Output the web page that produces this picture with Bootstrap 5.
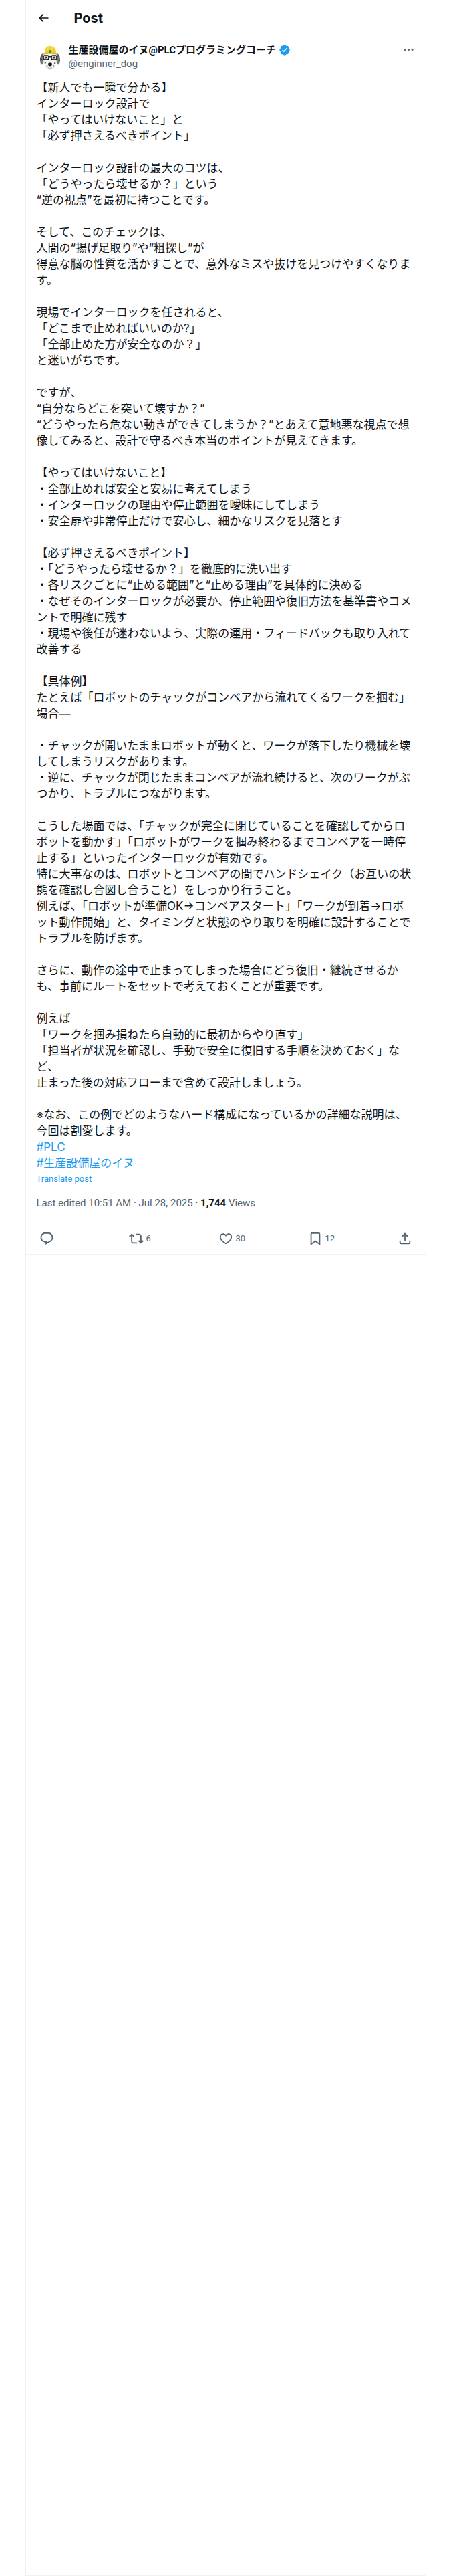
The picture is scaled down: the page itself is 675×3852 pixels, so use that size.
<!DOCTYPE html>
<html lang="ja">
<head>
<meta charset="utf-8">
<meta name="viewport" content="width=device-width, initial-scale=1">
<title>Post</title>
<link rel="stylesheet" href="https://cdn.jsdelivr.net/npm/bootstrap@5.3.0/dist/css/bootstrap.min.css">
<style>
:root { --ink: #0f1419; --muted: #536471; --accent: #1d9bf0; --line: #eff3f4; }
body { font-family: Roboto, "Noto Sans CJK JP", sans-serif; color: var(--ink); font-size: 15px; line-height: 20px; }
.timeline { max-width: 600px; border: 1px solid var(--line); border-top: 0; }
.topbar { height: 53px; }
.topbar h1 { font-family: Inter, sans-serif; font-size: 20px; line-height: 24px; margin-left: 36px; }
.btn-icon { padding: 0; border: 0; line-height: 0; color: inherit; }
svg { fill: currentColor; }
.avatar { width: 40px; height: 40px; }
.author-row { padding-top: 12px; }
.author-name { font-weight: 700; color: var(--ink); }
.verified { color: var(--accent); }
.soft { color: var(--muted); }
.post-body { font-family: Inter, "Noto Sans CJK JP", sans-serif; font-size: 17px; line-height: 24px; margin-top: 14px; white-space: pre-wrap; overflow-wrap: break-word; }
.accent-link { color: var(--accent); }
.translate { font-size: 13px; line-height: 16px; margin-top: 4px; }
.meta { margin: 18px 0; }
.actions { height: 48px; border-top: 1px solid var(--line); padding: 0 4px; font-size: 13px; }
.actions .btn { font-size: 13px; color: var(--muted); }
.post { border-bottom: 1px solid var(--line); }
</style>
</head>
<body>
<main class="timeline mx-auto min-vh-100">
  <header class="topbar d-flex align-items-center px-3">
    <button type="button" class="btn btn-icon" aria-label="Back"><svg width="20" height="20" viewBox="0 0 24 24"><path d="M7.414 13l5.043 5.04-1.414 1.42L3.586 12l7.457-7.46 1.414 1.42L7.414 11H21v2H7.414z"/></svg></button>
    <h1 class="fw-bold mb-0">Post</h1>
  </header>
  <article class="post px-3">
    <div class="author-row d-flex align-items-start gap-2">
      <svg class="avatar flex-shrink-0" viewBox="0 0 40 40" role="img" aria-label="Avatar">
        <path d="M9 15C5 17 4 24 6 30c2 3 4 1 4-3zM31 15c4 2 5 9 3 15-2 3-4 1-4-3z" fill="#77777a"/>
        <path d="M9 15h22l-1 11-4 9c-3 4-9 4-12 0l-4-9z" fill="#f5f3ef" stroke="#a5a5a8" stroke-width=".5"/>
        <path d="M11 27l3 1-1 2zM28 27l-2 2 1 2zM15 32l2 1-1 2zM24 33l2-1-1 3zM5 22l3 1-2 3zM33 23l2 2-2 2z" fill="#333"/>
        <g fill="#dad7d3" stroke="#17171b" stroke-width="1.5"><rect x="10" y="18" width="8" height="6" rx="2"/><rect x="22" y="18" width="8" height="6" rx="2"/><path d="M18 20q2-1 4 0M10 19l-4-1M30 19l4-1" fill="none"/></g>
        <circle cx="14" cy="21" r="1.500" fill="#35302c"/><circle cx="26" cy="21" r="1.500" fill="#35302c"/>
        <path d="M17 30c1-2 5-2 6 0 0 3-2 4-3 4s-3-1-3-4z" fill="#141416"/><path d="M20 33v2m-3 1q3 2 6 0" stroke="#555" fill="none"/>
        <path d="M12 14C12 7 15 4 20 4s9 3 9 10z" fill="#f1cf35"/><path d="M10 15q10-4 20 0l1 2q-11-3-22 0z" fill="#d8bd28"/><path d="M17 5v5M23 5v5" stroke="#fae66d"/><circle cx="20" cy="12" r="2" fill="#35972f"/>
      </svg>
      <div class="flex-grow-1">
        <div class="d-flex align-items-center"><a href="#" class="author-name text-decoration-none">生産設備屋のイヌ@PLCプログラミングコーチ</a><svg class="verified ms-1" width="18" height="18" viewBox="0 0 22 22" role="img" aria-label="Verified"><path d="M20.396 11c-.018-.646-.215-1.275-.57-1.816-.354-.54-.852-.972-1.438-1.246.223-.607.27-1.264.14-1.897-.131-.634-.437-1.218-.882-1.687-.47-.445-1.053-.75-1.687-.882-.633-.13-1.29-.083-1.897.14-.273-.587-.704-1.086-1.245-1.44S11.647 1.62 11 1.604c-.646.017-1.273.213-1.813.568s-.969.854-1.24 1.44c-.608-.223-1.267-.272-1.902-.14-.635.13-1.22.436-1.69.882-.445.47-.749 1.055-.878 1.688-.13.633-.08 1.29.144 1.896-.587.274-1.087.705-1.443 1.245-.356.54-.555 1.17-.574 1.817.02.647.218 1.276.574 1.817.356.54.856.972 1.443 1.245-.224.606-.274 1.263-.144 1.896.13.634.433 1.218.877 1.688.47.443 1.054.747 1.687.878.633.132 1.29.084 1.897-.136.274.586.705 1.084 1.246 1.439.54.354 1.17.551 1.816.569.647-.016 1.276-.213 1.817-.567s.972-.854 1.245-1.44c.604.239 1.266.296 1.903.164.636-.132 1.22-.447 1.68-.907.46-.46.776-1.044.908-1.681s.075-1.299-.165-1.903c.586-.274 1.084-.705 1.439-1.246.354-.54.551-1.17.569-1.816zM9.662 14.85l-3.429-3.428 1.293-1.302 2.072 2.072 4.4-4.794 1.347 1.246z"/></svg></div>
        <a href="#" class="soft text-decoration-none d-block">@enginner_dog</a>
      </div>
      <button type="button" class="btn btn-icon soft" aria-label="More"><svg width="19" height="19" viewBox="0 0 24 24"><path d="M3 12c0-1.1.9-2 2-2s2 .9 2 2-.9 2-2 2-2-.9-2-2zm9 2c1.100 0 2-.9 2-2s-.9-2-2-2-2 .9-2 2 .9 2 2 2zm7 0c1.100 0 2-.9 2-2s-.9-2-2-2-2 .9-2 2 .9 2 2 2z"/></svg></button>
    </div>
    <div class="post-body">【新人でも一瞬で分かる】
インターロック設計で
「やってはいけないこと」と
「必ず押さえるべきポイント」

インターロック設計の最大のコツは、
「どうやったら壊せるか？」という
“逆の視点”を最初に持つことです。

そして、このチェックは、
人間の“揚げ足取り”や“粗探し”が
得意な脳の性質を活かすことで、意外なミスや抜けを見つけやすくなります。

現場でインターロックを任されると、
「どこまで止めればいいのか?」
「全部止めた方が安全なのか？」
と迷いがちです。

ですが、
“自分ならどこを突いて壊すか？”
“どうやったら危ない動きができてしまうか？”とあえて意地悪な視点で想像してみると、設計で守るべき本当のポイントが見えてきます。

【やってはいけないこと】
・全部止めれば安全と安易に考えてしまう
・インターロックの理由や停止範囲を曖昧にしてしまう
・安全扉や非常停止だけで安心し、細かなリスクを見落とす

【必ず押さえるべきポイント】
・「どうやったら壊せるか？」を徹底的に洗い出す
・各リスクごとに“止める範囲”と“止める理由”を具体的に決める
・なぜそのインターロックが必要か、停止範囲や復旧方法を基準書やコメントで明確に残す
・現場や後任が迷わないよう、実際の運用・フィードバックも取り入れて改善する

【具体例】
たとえば「ロボットのチャックがコンベアから流れてくるワークを掴む」場合—

・チャックが開いたままロボットが動くと、ワークが落下したり機械を壊してしまうリスクがあります。
・逆に、チャックが閉じたままコンベアが流れ続けると、次のワークがぶつかり、トラブルにつながります。

こうした場面では、「チャックが完全に閉じていることを確認してからロボットを動かす」「ロボットがワークを掴み終わるまでコンベアを一時停止する」といったインターロックが有効です。
特に大事なのは、ロボットとコンベアの間でハンドシェイク（お互いの状態を確認し合図し合うこと）をしっかり行うこと。
例えば、「ロボットが準備OK→コンベアスタート」「ワークが到着→ロボット動作開始」と、タイミングと状態のやり取りを明確に設計することでトラブルを防げます。

さらに、動作の途中で止まってしまった場合にどう復旧・継続させるかも、事前にルートをセットで考えておくことが重要です。

例えば
「ワークを掴み損ねたら自動的に最初からやり直す」
「担当者が状況を確認し、手動で安全に復旧する手順を決めておく」など、
止まった後の対応フローまで含めて設計しましょう。

※なお、この例でどのようなハード構成になっているかの詳細な説明は、今回は割愛します。
<a href="#" class="accent-link text-decoration-none">#PLC</a>
<a href="#" class="accent-link text-decoration-none">#生産設備屋のイヌ</a></div>
    <button type="button" class="btn btn-icon translate accent-link d-block">Translate post</button>
    <p class="meta soft">Last edited 10:51 AM · Jul 28, 2025 · <strong class="author-name">1,744</strong> Views</p>
    <div class="actions d-flex align-items-center justify-content-between">
      <div class="col"><button type="button" class="btn btn-icon" aria-label="Reply"><svg width="22" height="22" viewBox="0 0 24 24"><path d="M1.751 10c0-4.420 3.584-8 8.005-8h4.366c4.490 0 8.129 3.640 8.129 8.130 0 2.960-1.607 5.680-4.196 7.110l-8.054 4.460v-3.690h-.067c-4.490.1-8.183-3.510-8.183-8.010zm8.005-6c-3.317 0-6.005 2.690-6.005 6 0 3.370 2.770 6.080 6.138 6.010l.351-.01h1.761v2.300l5.087-2.810c1.951-1.080 3.163-3.130 3.163-5.360 0-3.390-2.744-6.130-6.129-6.130H9.756z"/></svg></button></div>
      <div class="col"><button type="button" class="btn btn-icon d-flex align-items-center gap-1" aria-label="6 reposts"><svg width="22" height="22" viewBox="0 0 24 24"><path d="M4.500 3.880l4.432 4.140-1.364 1.460L5.500 7.550V16c0 1.100.896 2 2 2H13v2H7.500c-2.209 0-4-1.790-4-4V7.550L1.432 9.480.068 8.020 4.500 3.880zM16.500 6H11V4h5.500c2.209 0 4 1.790 4 4v8.450l2.068-1.930 1.364 1.460-4.432 4.140-4.432-4.140 1.364-1.460 2.068 1.930V8c0-1.100-.896-2-2-2z"/></svg><span>6</span></button></div>
      <div class="col"><button type="button" class="btn btn-icon d-flex align-items-center gap-1" aria-label="30 likes"><svg width="22" height="22" viewBox="0 0 24 24"><path d="M16.697 5.500c-1.222-.06-2.679.51-3.890 2.160l-.805 1.090-.806-1.090C9.984 6.010 8.526 5.440 7.304 5.500c-1.243.07-2.349.78-2.910 1.910-.552 1.120-.633 2.780.479 4.820 1.074 1.970 3.257 4.270 7.129 6.610 3.870-2.340 6.052-4.640 7.126-6.610 1.111-2.040 1.030-3.700.477-4.820-.561-1.130-1.666-1.840-2.908-1.910zm4.187 7.690c-1.351 2.480-4.001 5.120-8.379 7.670l-.503.3-.504-.3c-4.379-2.550-7.029-5.190-8.382-7.670-1.360-2.500-1.410-4.860-.514-6.670.887-1.790 2.647-2.910 4.601-3.010 1.651-.09 3.368.56 4.798 2.010 1.429-1.450 3.146-2.100 4.796-2.010 1.954.1 3.714 1.220 4.601 3.010.896 1.810.846 4.170-.514 6.670z"/></svg><span>30</span></button></div>
      <div class="col"><button type="button" class="btn btn-icon d-flex align-items-center gap-1" aria-label="12 bookmarks"><svg width="22" height="22" viewBox="0 0 24 24"><path d="M4 4.500C4 3.120 5.119 2 6.500 2h11C18.881 2 20 3.120 20 4.500v18.440l-8-5.710-8 5.710V4.500zM6.500 4c-.276 0-.5.22-.5.5v14.560l6-4.290 6 4.290V4.500c0-.28-.224-.5-.5-.5h-11z"/></svg><span>12</span></button></div>
      <button type="button" class="btn btn-icon" aria-label="Share"><svg width="22" height="22" viewBox="0 0 24 24"><path d="M12 2.590l5.700 5.700-1.410 1.420L13 6.410V16h-2V6.410l-3.300 3.300-1.410-1.420L12 2.590zM21 15l-.02 3.510c0 1.380-1.120 2.490-2.500 2.490H5.500C4.110 21 3 19.880 3 18.500V15h2v3.500c0 .28.22.5.5.5h12.980c.28 0 .5-.22.5-.5L19 15h2z"/></svg></button>
    </div>
  </article>
</main>
<script src="https://cdn.jsdelivr.net/npm/bootstrap@5.3.0/dist/js/bootstrap.bundle.min.js"></script>
</body>
</html>
